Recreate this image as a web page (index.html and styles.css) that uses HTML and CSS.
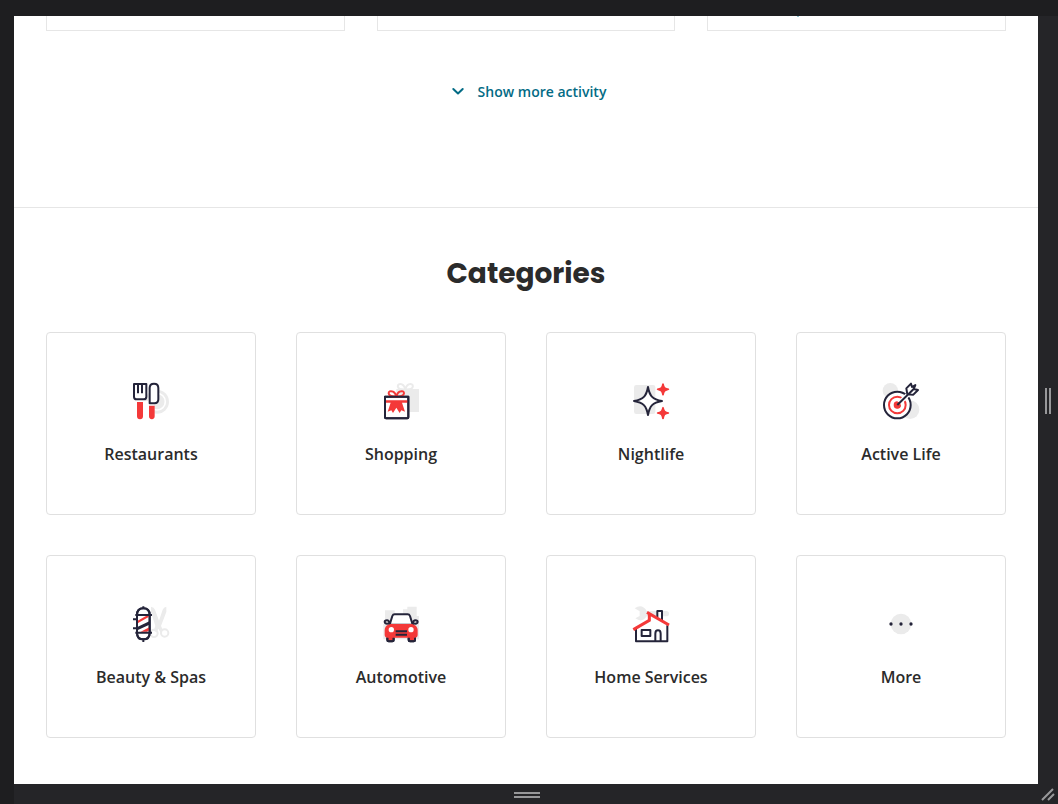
FILE: index.html
```html
<!DOCTYPE html>
<html lang="en">
<head>
<meta charset="utf-8">
<meta name="viewport" content="width=device-width, initial-scale=1">
<title>Categories</title>
<link rel="stylesheet" href="styles.css">
</head>
<body>
<div class="frame">
  <main class="page">
    <section class="activity">
      <div class="activity-cards">
        <div class="activity-card"></div>
        <div class="activity-card"></div>
        <div class="activity-card"><span class="link-tail"></span></div>
      </div>
      <button class="show-more" type="button">
        <svg class="chevron" viewBox="0 0 24 24" aria-hidden="true"><path d="M7.300 9l4.700 4.500L16.700 9"/></svg>
        Show more activity
      </button>
    </section>
    <section class="categories">
      <h2 class="title">Categories</h2>
      <div class="grid">
        <a class="card" href="#">
          <svg class="icon" viewBox="0 0 156 156" aria-hidden="true">
            <circle class="shade" cx="96" cy="80" r="36"/><circle cx="96" cy="80" r="25" fill="none" stroke="#fff" stroke-width="5"/>
            <path fill="#fff" d="M32 78h56v57H32z"/>
            <path class="red" d="M36 81h18v43a9 9 0 0 1-18 0zM72 92h17v32a8.500 8.500 0 0 1-17 0z"/>
            <path class="line fill" d="M27 27h37v38q0 8-8 8H35q-8 0-8-8zM74 85V39q0-13 13-13t13 13v34q0 12-12 12z"/>
            <path class="line" d="M39 28v27M51 28v27"/>
          </svg>
          <span class="label">Restaurants</span>
        </a>
        <a class="card" href="#">
          <svg class="icon" viewBox="0 0 156 156" aria-hidden="true">
            <path class="shade" d="M64 42h68v69H64z"/><path class="shade-line" d="M91 43c-31 2-26-21-10-15 7 3 10 15 10 15s3-12 10-15c16-6 21 17-10 15"/>
            <path class="line fill" d="M30 65h70v62q0 3-3 3H33q-3 0-3-3z"/>
            <path class="red" d="M30 76h70v7H81l9 27-11-4-5 8-10-16-10 16-5-8-11 4 9-27H30z"/>
            <path class="red-line" d="M64 65c-32 0-26-22-10-15 7 3 10 15 10 15s3-12 10-15c16-7 22 15-10 15"/>
            <path class="line" d="M30 65h70v62q0 3-3 3H33q-3 0-3-3z"/>
          </svg>
          <span class="label">Shopping</span>
        </a>
        <a class="card" href="#">
          <svg class="icon" viewBox="0 0 156 156" aria-hidden="true">
            <rect class="shade" x="27" y="30" width="64" height="87" rx="7"/>
            <path class="line fill" d="M69 36c5 28 14 37 42 42-28 5-37 14-42 42-5-28-14-37-42-42 28-5 37-14 42-42z"/>
            <path class="red" d="M114 25q3 0 4 7 1 6 7 7 8 1 8 4t-8 4q-6 1-7 7-1 8-4 8t-4-8q-1-6-7-7-8-1-8-4t8-4q6-1 7-7 1-7 4-7zM114 95q3 0 4 8 1 6 7 7 8 1 8 4t-8 4q-6 1-7 7-1 8-4 8t-4-8q-1-6-7-7-8-1-8-4t8-4q6-1 7-7 1-8 4-8z"/>
          </svg>
          <span class="label">Nightlife</span>
        </a>
        <a class="card" href="#">
          <svg class="icon" viewBox="0 0 156 156" aria-hidden="true">
            <circle class="shade" cx="46" cy="47" r="23"/><circle class="shade" cx="105" cy="104" r="28"/>
            <circle class="line fill" cx="67" cy="90" r="40"/>
            <circle class="red-line" cx="67" cy="90" r="25"/><circle class="red" cx="67" cy="90" r="11"/>
            <path class="gap" d="M68 89l34-33"/>
            <circle class="red" cx="67" cy="90" r="10"/>
            <path class="line fill" d="M97 58l-3-18 14-14 3 10 10-6-5 12 13 3-14 14zM67 90l49-48"/>
          </svg>
          <span class="label">Active Life</span>
        </a>
        <a class="card" href="#">
          <svg class="icon" viewBox="0 0 156 156" aria-hidden="true">
            <path class="shade" d="M78 26q9 1 12 9l12 33 11-33q3-8 11-9v16l-16 42 6 13-8 6-6-11-5 11-9-5 5-14-13-42z"/>
            <circle class="shade-line" cx="87" cy="106" r="11"/><circle class="shade-line" cx="119" cy="105" r="11"/>
            <path class="line fill" d="M36 51q0-20 19-20t19 20v53q0 20-19 20t-19-20z"/>
            <path class="red" d="M38 68l25-14h8v3L38 76zM47 101l26-13v9l-7 4z"/>
            <path class="dark" d="M37 87l36-17v10L37 97z"/>
            <path class="line" d="M36 51q0-20 19-20t19 20v53q0 20-19 20t-19-20zM31 51h50M24 64h12M24 91h12M31 104h50M55 25v5M55 125v7"/>
          </svg>
          <span class="label">Beauty &amp; Spas</span>
        </a>
        <a class="card" href="#">
          <svg class="icon" viewBox="0 0 156 156" aria-hidden="true">
            <path class="shade" d="M30 37h29v12h25V34h13v-8h28v28h7v70H25V78h5z"/>
            <path class="line fill" d="M44 80l8-26q2-5 7-5h39q5 0 7 5l8 26z"/>
            <path class="line red" d="M37 114h19v13q0 3-4 3H41q-4 0-4-4zM101 114h19v12q0 4-4 4h-11q-4 0-4-3z"/>
            <path class="red" d="M43 78h70q15 6 15 18v14q0 9-9 9H38q-9 0-9-9V96q0-12 14-18z"/>
            <circle cx="49" cy="95" r="8" fill="#fff"/><circle cx="108" cy="95" r="8" fill="#fff"/>
            <path class="dark" d="M62 97h34v6H62zM62 107h34v6H62z"/>
            <path class="line" d="M44 76q-15 3-15-4 0-5 7-5 6 0 8 9M113 76q15 3 15-4 0-5-7-5-6 0-8 9"/>
            <path class="line" d="M37 120v6q0 4 4 4h11q4 0 4-4v-6M101 120v6q0 4 4 4h11q4 0 4-4v-6"/>
          </svg>
          <span class="label">Automotive</span>
        </a>
        <a class="card" href="#">
          <svg class="icon" viewBox="0 0 156 156" aria-hidden="true">
            <path class="shade" d="M29 31q22-15 36 8h59q8 0 8 8t-8 8H65q-13 21-34 6l13-7V40z"/>
            <path class="line fill" d="M97 58V39h14v28"/>
            <path fill="#fff" d="M33 90l40-24V50l54 31v49H33z"/>
            <path class="line" d="M33 93v37h94V82M50 96h26v18H50zM91 130v-23q0-10 8-10t8 10v23"/>
            <path class="red-line roof" d="M25 95l48-28V48M66 43l66 38"/>
          </svg>
          <span class="label">Home Services</span>
        </a>
        <a class="card" href="#">
          <svg class="icon" viewBox="0 0 156 156" aria-hidden="true">
            <circle class="shade" cx="78" cy="78" r="31"/>
            <circle class="dark" cx="48" cy="78" r="5"/><circle class="dark" cx="78" cy="78" r="5"/><circle class="dark" cx="108" cy="78" r="5"/>
          </svg>
          <span class="label">More</span>
        </a>
      </div>
    </section>
  </main>
  <div class="side-rail"><span class="grip-vertical"></span></div>
  <div class="bottom-rail"><span class="grip-horizontal"></span></div>
  <div class="corner">
    <svg class="corner-grip" viewBox="0 0 16 16" aria-hidden="true"><path d="M2 14L13 3M8 14l6-6"/></svg>
  </div>
</div>
</body>
</html>
```
FILE: styles.css
```css
* { box-sizing: border-box; }
body {
  margin: 0;
  background: #1e1e20;
  color: #2d2e2f;
  font-family: "Open Sans", "Noto Sans", sans-serif;
}
.frame {
  display: grid;
  grid-template-columns: minmax(0, 1fr) 20px;
  grid-template-rows: 1fr 20px;
  min-height: 100vh;
  padding: 16px 0 0 14px;
}
.page { background: #fff; }
.activity {
  display: flex;
  flex-direction: column;
  align-items: center;
  padding: 0 32px 103px;
  border-bottom: 1px solid #e6e6e6;
}
.activity-cards {
  display: grid;
  grid-template-columns: repeat(3, 1fr);
  gap: 32px;
  width: 100%;
  margin-bottom: 49px;
}
.activity-card {
  height: 15px;
  border: 1px solid #e6e6e6;
  border-top: 0;
}
.link-tail {
  display: block;
  width: 2px;
  height: 1px;
  margin-left: 89px;
  background: #8fc3d1;
}
.show-more {
  display: flex;
  align-items: center;
  gap: 8px;
  padding: 0;
  border: 0;
  background: none;
  color: #036b85;
  font: 600 14px/24px "Open Sans", "Noto Sans", sans-serif;
  cursor: pointer;
}
.chevron {
  width: 24px;
  height: 24px;
  fill: none;
  stroke: #036b85;
  stroke-width: 2;
  stroke-linecap: round;
  stroke-linejoin: round;
}
.categories { padding: 48px 32px 46px; }
.title {
  margin: 0 0 40px;
  color: #2b2b2b;
  font: 700 28px/36px Poppins, Inter, sans-serif;
  text-align: center;
}
.grid {
  display: grid;
  grid-template-columns: repeat(4, 1fr);
  gap: 40px;
}
.card {
  display: flex;
  flex-direction: column;
  align-items: center;
  gap: 15px;
  padding: 42px 8px 48px;
  border: 1px solid #e0e0e0;
  border-radius: 4px;
  color: #2b2b2b;
  text-decoration: none;
}
.icon { width: 52px; height: 52px; }
.label { font-size: 16px; font-weight: 600; line-height: 24px; }
.shade { fill: #ebebeb; }
.shade-line { fill: none; stroke: #ebebeb; stroke-width: 6; }
.red { fill: #f43939; }
.red-line { fill: none; stroke: #f43939; stroke-width: 6; }
.roof { stroke-width: 9; }
.dark { fill: #24243a; }
.line {
  fill: none;
  stroke: #24243a;
  stroke-width: 6;
  stroke-linejoin: round;
}
.fill { fill: #fff; }
.line.red { fill: #f43939; }
.gap { fill: none; stroke: #fff; stroke-width: 14; }
.side-rail, .bottom-rail, .corner {
  display: flex;
  align-items: center;
  justify-content: center;
  background: #252528;
}
.side-rail { padding-top: 2px; }
.bottom-rail { padding: 2px 0 0 2px; }
.grip-vertical {
  width: 6px;
  height: 26px;
  border: solid #98989a;
  border-width: 0 2px;
}
.grip-horizontal {
  width: 26px;
  height: 6px;
  border: solid #98989a;
  border-width: 2px 0;
}
.corner-grip {
  width: 16px;
  height: 16px;
  fill: none;
  stroke: #98989a;
  stroke-width: 2;
}
```
